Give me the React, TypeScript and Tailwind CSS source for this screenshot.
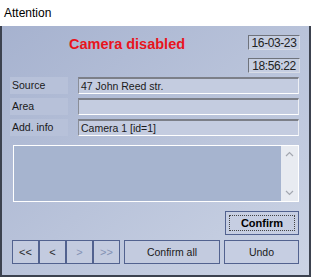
import React from "react";

const font = { fontFamily: '"Liberation Sans", Arial, sans-serif' };

function Field({ label, value }: { label: string; value: string }) {
  return (
    <div className="flex items-stretch h-[17px] ml-[8px] mr-[10px]">
      <div className="w-[58px] bg-[#b7c1d9] text-[10.5px] text-[#1a1a1a] pl-[2px] flex items-center leading-none">
        {label}
      </div>
      <div className="ml-[10px] flex-1 bg-[#c4cce0] border-t-2 border-l border-t-[#7c7f88] border-l-[#8a8e98] border-b border-r border-b-white border-r-[#eef0f5] text-[10.5px] text-[#1a1a1a] pl-[2px] flex items-center leading-none">
        {value}
      </div>
    </div>
  );
}

function NavBtn({ label, disabled }: { label: string; disabled?: boolean }) {
  return (
    <div
      className={`w-[27px] h-[24px] border border-[#52628f] bg-[#c3cbdf] flex items-center justify-center text-[11px] leading-none ${
        disabled ? "text-[#8392b4]" : "text-[#2a2a2a]"
      }`}
    >
      {label}
    </div>
  );
}

export default function App() {
  return (
    <div className="w-[311px] h-[277px] flex flex-col bg-white" style={font}>
      <div className="h-[26px] bg-white flex items-center pl-[4px] text-[12px] text-black">
        Attention
      </div>
      <div className="flex-1 flex flex-col border-l-2 border-r-2 border-b-2 border-[#3c424f] bg-linear-to-br from-[#a6b2cf] to-[#ccd4e5]">
        <div className="flex justify-between pt-[9px] mr-[9px]">
          <div className="ml-[67px] mt-[2px] text-[14.5px] font-bold text-[#e8141c] leading-[15px]">
            Camera disabled
          </div>
          <div className="flex flex-col gap-[8px]">
            <div className="w-[52px] h-[15px] border border-t-[#6f737c] border-l-[#6f737c] border-b-[#d8dce6] border-r-[#d8dce6] bg-[#c6cee1] text-[12px] tracking-[-0.4px] whitespace-nowrap text-[#222] leading-none flex items-center justify-center">
              16-03-23
            </div>
            <div className="w-[52px] h-[15px] border border-t-[#6f737c] border-l-[#6f737c] border-b-[#d8dce6] border-r-[#d8dce6] bg-[#c6cee1] text-[12px] tracking-[-0.4px] whitespace-nowrap text-[#222] leading-none flex items-center justify-center">
              18:56:22
            </div>
          </div>
        </div>
        <div className="flex flex-col gap-[4px] mt-[4px]">
          <Field label="Source" value="47 John Reed str." />
          <Field label="Area" value="" />
          <Field label="Add. info" value="Camera 1 [id=1]" />
        </div>
        <div className="mt-[9px] ml-[11px] mr-[10px] h-[57px] border border-white bg-[#a6b4cf] flex justify-end">
          <div className="w-[17px] h-full bg-[#e8ebf1] flex flex-col items-center justify-between py-[5px]">
            <svg width="9" height="6" viewBox="0 0 9 6">
              <path d="M1 5 L4.5 1.5 L8 5" stroke="#a3a7b0" strokeWidth="1.2" fill="none" />
            </svg>
            <svg width="9" height="6" viewBox="0 0 9 6">
              <path d="M1 1 L4.5 4.5 L8 1" stroke="#a3a7b0" strokeWidth="1.2" fill="none" />
            </svg>
          </div>
        </div>
        <div className="flex justify-end mt-[9px] mr-[10px]">
          <div className="w-[74px] h-[24px] border border-[#52628f] bg-[#c6cee2] p-[3px]">
            <div className="w-full h-full border border-dotted border-[#444] flex items-center justify-center text-[11px] font-bold text-black leading-none">
              Confirm
            </div>
          </div>
        </div>
        <div className="flex items-center mt-[5px] ml-[10px] mr-[10px]">
          <NavBtn label="<<" />
          <NavBtn label="<" />
          <NavBtn label=">" disabled />
          <NavBtn label=">>" disabled />
          <div className="ml-[4px] w-[96px] h-[24px] border border-[#52628f] bg-[#c3cbdf] flex items-center justify-center text-[10.5px] text-[#1a1a1a] leading-none">
            Confirm all
          </div>
          <div className="ml-[4px] flex-1 h-[24px] border border-[#52628f] bg-[#c6cee2] flex items-center justify-center text-[10.5px] text-[#1a1a1a] leading-none">
            Undo
          </div>
        </div>
      </div>
    </div>
  );
}
